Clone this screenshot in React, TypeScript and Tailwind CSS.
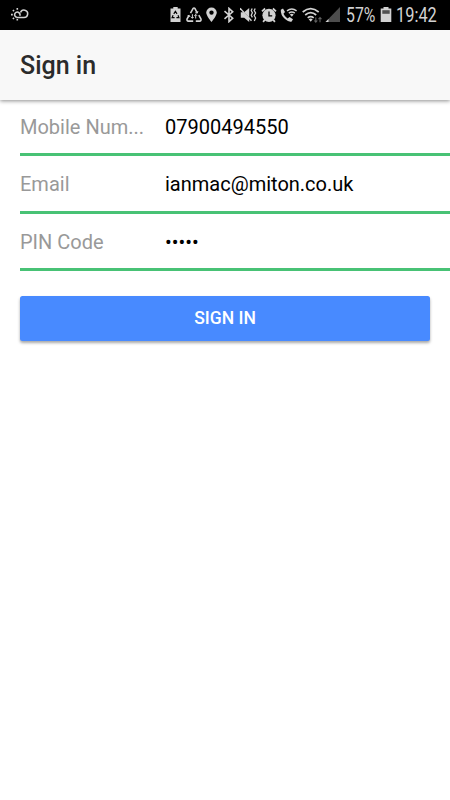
import React from 'react'

interface FieldProps {
  label: string
  value: string
  type?: string
}

const StatusBar = () => (
  <div className="flex h-[30px] items-center bg-black pl-[10px] pr-[12px] text-[#d2d2d2]">
    {/* Weather */}
    <svg className="-mt-[2px]" width="19" height="14" viewBox="0 0 19 14" fill="none" stroke="currentColor" strokeWidth="1.6">
      <path d="M6.5 10.5H14a3.7 3.7 0 1 0-3.5-5" />
      <path d="M9.8 8.8a2.7 2.7 0 1 0-3 1.6" />
      <path d="M7.3 1v1.8M2.9 3l1.1 1.1M1 7.6h1.8M2.9 12l1.1-1.1M7.3 12v1.6" strokeWidth="1.6" />
    </svg>

    <div className="ml-auto flex items-center">
      {/* Battery with recycle mark */}
      <svg className="mr-[5px]" width="11" height="16" viewBox="0 0 11 16">
        <path d="M3.3 0h4.4v1.5H10.5V15H.5V1.5h2.8z" fill="currentColor" />
        <path d="M3.8 6.8l1.6-2.4 1.6 2.4M8 8.3l.9 2.3H6.4M4.6 10.6H2.1l1-2.3" fill="none" stroke="#000" strokeWidth="1.2" />
      </svg>
      {/* Data recycle triangle */}
      <svg className="mr-[4px]" width="16" height="16" viewBox="0 0 16 16" fill="none" stroke="currentColor" strokeWidth="1.6">
        <path d="M4.5 6.2L7 1.6q1-1.3 2 0l2.2 4.2M12.8 8.2l2.1 3.7q.6 2-1.4 2.2H9.8M7.2 14.1H2.5q-2-.2-1.4-2.2l2-3.5" />
        <path d="M9.2 5.8l2.2.3.5-2M1.5 8.8l1.7-.5.8 1.8" strokeWidth="1" />
        <path d="M6.4 7.2v4M5.1 9.9l1.3 1.4 1.3-1.4M9.7 11.5v-4M8.4 8.8l1.3-1.4L11 8.8" strokeWidth="1" />
      </svg>
      {/* Location */}
      <svg className="mr-[6px]" width="11" height="16" viewBox="0 0 11 16">
        <path d="M5.5.5A5.3 5.3 0 0 0 .2 5.6C.2 8.9 5.5 15 5.5 15s5.3-6.1 5.3-9.4A5.3 5.3 0 0 0 5.5.5zm0 2.9a2.2 2.2 0 1 1 0 4.4 2.2 2.2 0 0 1 0-4.4z" fill="currentColor" fillRule="evenodd" />
      </svg>
      {/* Bluetooth */}
      <svg className="mr-[5px]" width="12" height="16" viewBox="0 0 12 16" fill="none" stroke="currentColor" strokeWidth="1.6">
        <path d="M1.5 4.2l8.2 7-3.7 3.4V1.4l3.7 3.4-8.2 7" />
      </svg>
      {/* Vibrate / muted */}
      <svg className="mr-[4px]" width="17" height="16" viewBox="0 0 17 16">
        <path d="M.8 5.2h3.4L9.2 1v14l-5-4.2H.8z" fill="currentColor" />
        <path d="M.8 1.8l11 12" stroke="#000" strokeWidth="1" />
        <path d="M0 1.2l11.5 12.6" stroke="currentColor" strokeWidth="1.4" />
        <path d="M12.2 1.5l-1 2 1.2 2.2-1.2 2.5 1.2 2.2M15.2 1.5l-1 2 1.4 2.5-1.4 2.5 1.4 2.5-1.3 3" fill="none" stroke="currentColor" strokeWidth="1.3" />
      </svg>
      {/* Alarm */}
      <svg className="mr-[3px]" width="16" height="16" viewBox="0 0 16 16">
        <circle cx="8" cy="8.3" r="6.6" fill="currentColor" />
        <path d="M1 4.3l3.1-2.8M15 4.3l-3.1-2.8M3.8 12.8l-1.7 2.1M12.2 12.8l1.7 2.1" stroke="currentColor" strokeWidth="1.8" />
        <path d="M8 4.4v4.5h3.2" fill="none" stroke="#000" strokeWidth="1.3" />
      </svg>
      {/* Wi-Fi calling */}
      <svg className="mr-[4px]" width="18" height="16" viewBox="0 0 18 16" fill="none" stroke="currentColor">
        <path d="M.8 2.8L3 1.5l2 3.6-1.5 1.6q1.3 3 4 4.8L9.6 10l3.4 2.2-1.3 2.2q-2.6 1-6.7-2.3-4.6-4-4.2-9.3z" fill="currentColor" stroke="none" />
        <path d="M7 3.9q4.8-3.9 9.6 0M8.8 6.1q3-2.3 6 0" strokeWidth="1.4" />
        <path d="M9.9 7.5q1.9-1.4 3.8 0L11.8 9.8z" fill="currentColor" stroke="none" />
      </svg>
      {/* Wi-Fi */}
      <svg className="mr-[2px]" width="21" height="17" viewBox="0 0 21 17" fill="none" stroke="currentColor">
        <path d="M.7 5q8-6.8 16 0M3.2 8q5.5-4.6 11 0M5.7 10.8q3-2.5 6 0" strokeWidth="1.7" />
        <path d="M6.7 12.3q2-1.4 4 0l-2 2.4z" fill="currentColor" stroke="none" />
        <path d="M13.8 10.5v4.7M12.3 13.5l1.5 1.7 1.5-1.7M18 15.2v-4.7M16.5 12.2l1.5-1.7 1.5 1.7" stroke="#606060" strokeWidth="1.1" />
      </svg>
      {/* Signal strength */}
      <svg className="mr-[6px]" width="15" height="16" viewBox="0 0 15 16">
        <path d="M15 0v15H.5z" fill="#4d4d4d" />
        <path d="M3.5 12V15H.5z" fill="currentColor" />
      </svg>
      <div className="w-[34px]">
        <span className="inline-block origin-left scale-x-[0.79] whitespace-nowrap text-[20px] leading-[30px]">57%</span>
      </div>
      {/* Battery */}
      <svg className="mr-[4px]" width="12" height="16" viewBox="0 0 12 16">
        <path d="M3.5 0h5v1.5h2.8V15H.7V1.5h2.8z" fill="currentColor" />
        <path d="M2.3 3.2h7.4v3.6H2.3z" fill="#505050" />
      </svg>
      <div className="w-[42px]">
        <span className="inline-block origin-left scale-x-[0.82] whitespace-nowrap text-[20px] leading-[30px]">19:42</span>
      </div>
    </div>
  </div>
)

const Field: React.FC<FieldProps> = ({ label, value, type = 'text' }) => (
  <label className="ml-5 flex h-[57.5px] items-center border-b-3 border-[#48c275] pt-[2px] text-[20px]">
    <span className="mr-5 w-[125px] whitespace-nowrap text-[#999]">{label}</span>
    <input className="min-w-0 flex-1 bg-transparent text-black outline-none" type={type} defaultValue={value} />
  </label>
)

export default function App() {
  return (
    <div className="h-[800px] w-full overflow-hidden bg-white font-['Roboto',sans-serif]">
      <StatusBar />
      <header className="relative z-10 flex h-[70px] items-center bg-[#f8f8f8] px-5 pt-[2px] shadow-[0_1px_4px_rgba(0,0,0,0.45)]">
        <h1 className="text-[25px] font-medium text-[#2b2b2b]">Sign in</h1>
      </header>
      <form className="-mt-[1.5px]" onSubmit={(e) => e.preventDefault()}>
        <Field label="Mobile Num..." value="07900494550" />
        <Field label="Email" value="ianmac@miton.co.uk" />
        <Field label="PIN Code" value="12345" type="password" />
        <div className="px-5 pt-[25px]">
          <button className="h-[45px] w-full rounded-[2.5px] bg-[#488aff] text-[17.5px] font-medium text-white shadow-[0_2px_3px_rgba(0,0,0,0.35)]">
            SIGN IN
          </button>
        </div>
      </form>
    </div>
  )
}
